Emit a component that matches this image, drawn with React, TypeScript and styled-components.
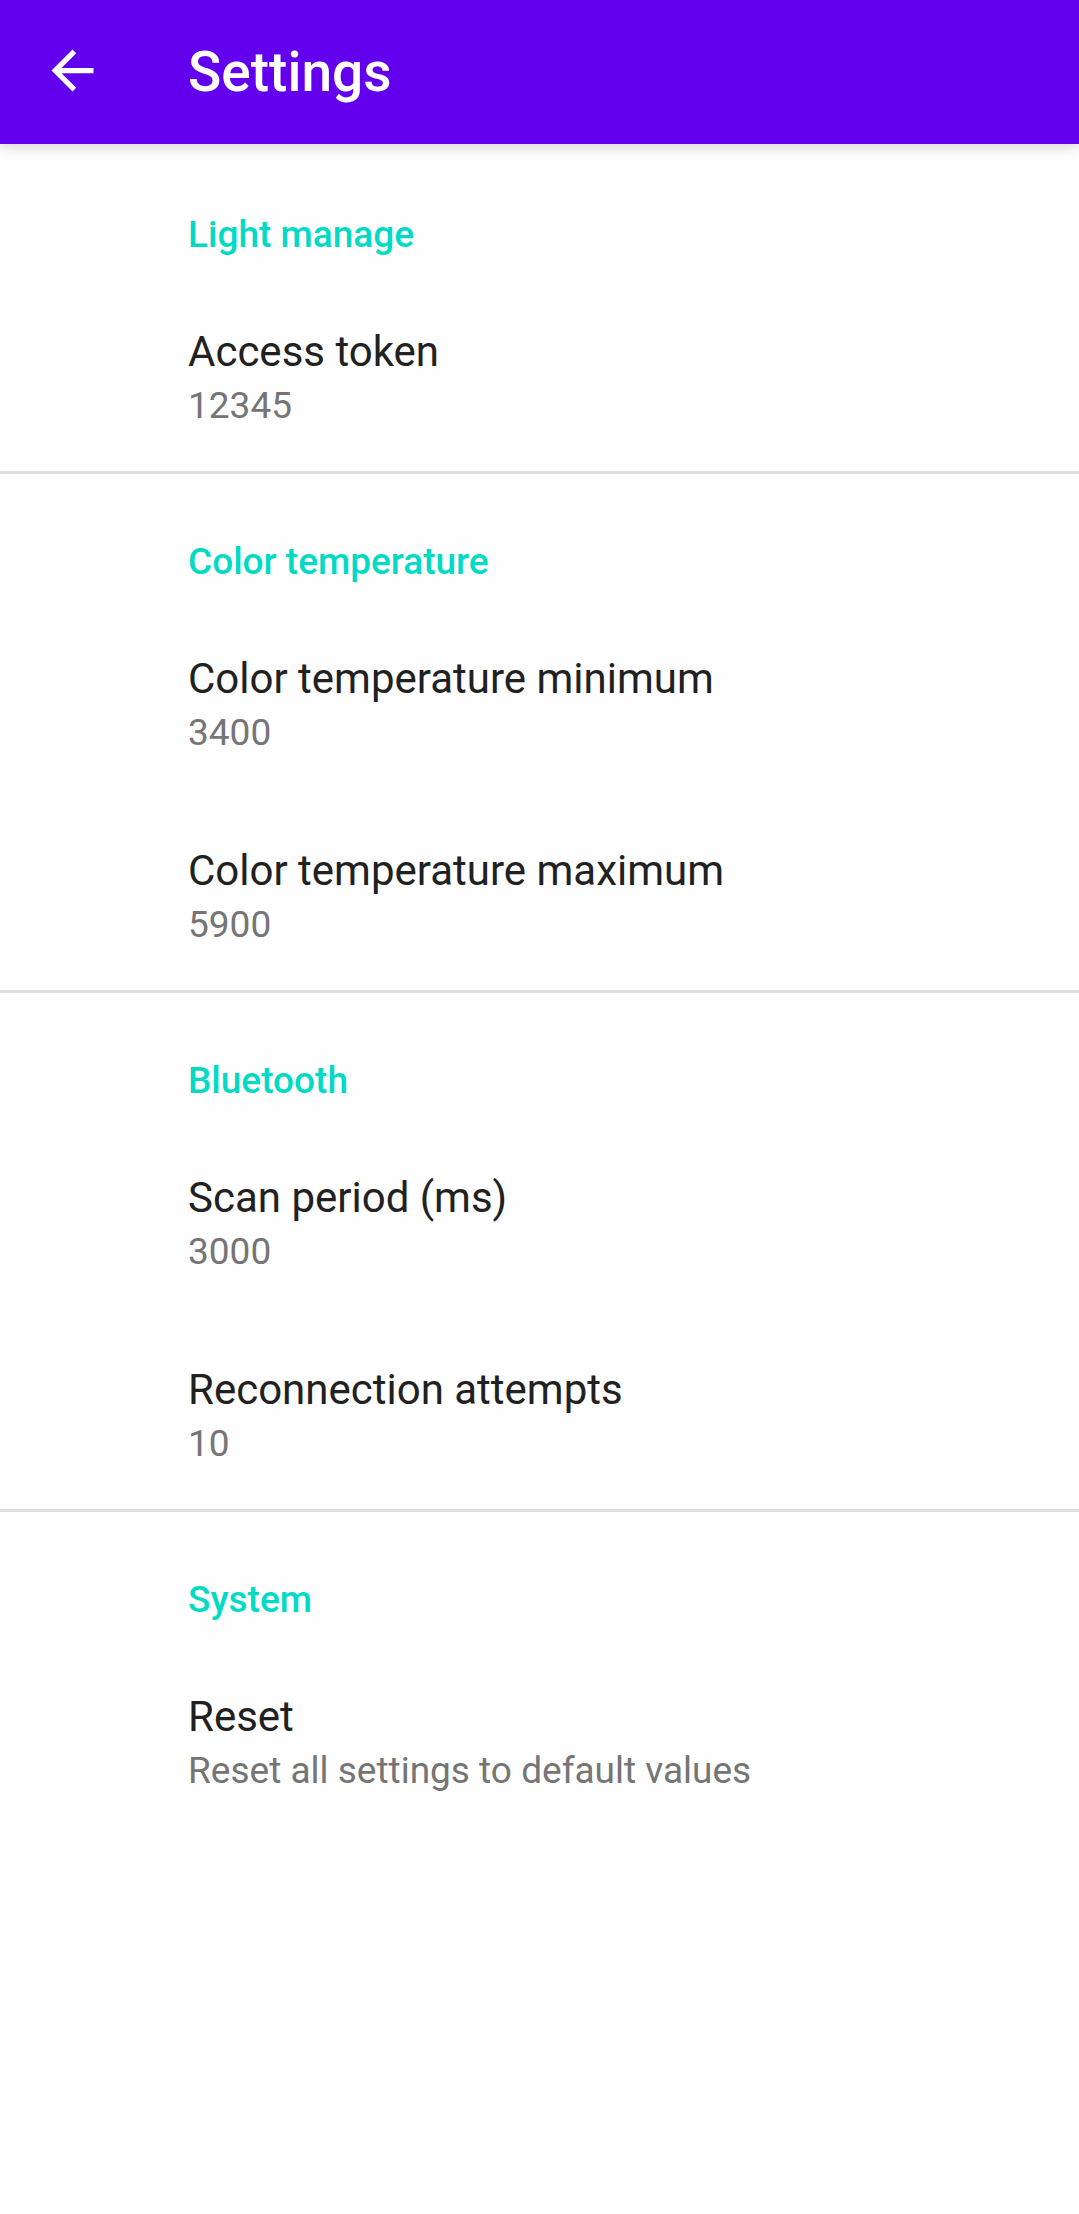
import React from "react";
import styled, { createGlobalStyle } from "styled-components";

const GlobalStyle = createGlobalStyle`
  * { box-sizing: border-box; }
  body { margin: 0; background: #fefefe; font-family: Roboto, "Noto Sans", sans-serif; }
`;

const AppBar = styled.header`
  display: flex;
  align-items: flex-start;
  height: 144px;
  background: #6200ee;
  color: #fff;
  box-shadow: 0 2px 14px rgba(0, 0, 0, 0.19);
`;

const BackButton = styled.button`
  display: flex;
  align-items: center;
  justify-content: center;
  width: 145px;
  height: 141px;
  padding: 0;
  border: 0;
  background: none;
  color: inherit;
  cursor: pointer;
`;

const Title = styled.h1`
  margin: 0;
  padding: 40px 48px 40px 43px;
  font-size: 55px;
  line-height: 64px;
  font-weight: 500;
`;

const Section = styled.section`
  border-top: 3px solid #dfdfdf;
  &:first-child { border-color: transparent; }
`;

const SectionTitle = styled.h2`
  margin: 0;
  padding: 66px 48px 22px 188px;
  color: #03dac5;
  font-size: 37px;
  line-height: 44px;
  font-weight: 500;
`;

const Preference = styled.button`
  display: flex;
  flex-direction: column;
  width: 100%;
  padding: 45px 48px 39px 188px;
  border: 0;
  background: none;
  font-family: inherit;
  text-align: left;
  cursor: pointer;
`;

const Label = styled.span`
  color: #212121;
  font-size: 42px;
  line-height: 56px;
`;

const Summary = styled.span`
  color: #757575;
  font-size: 37px;
  line-height: 52px;
`;

const groups = [
  { title: "Light manage", items: [{ label: "Access token", summary: "12345" }] },
  {
    title: "Color temperature",
    items: [
      { label: "Color temperature minimum", summary: "3400" },
      { label: "Color temperature maximum", summary: "5900" },
    ],
  },
  {
    title: "Bluetooth",
    items: [
      { label: "Scan period (ms)", summary: "3000" },
      { label: "Reconnection attempts", summary: "10" },
    ],
  },
  { title: "System", items: [{ label: "Reset", summary: "Reset all settings to default values" }] },
];

export default function App() {
  return (
    <>
      <GlobalStyle />
      <AppBar>
        <BackButton aria-label="Navigate up">
          <svg width="63" height="63" viewBox="0 0 24 24" fill="currentColor" aria-hidden="true">
            <path d="M20 11H7.83l5.59-5.59L12 4l-8 8 8 8 1.41-1.41L7.83 13H20v-2z" />
          </svg>
        </BackButton>
        <Title>Settings</Title>
      </AppBar>
      <main>
        {groups.map((group) => (
          <Section key={group.title}>
            <SectionTitle>{group.title}</SectionTitle>
            {group.items.map((item) => (
              <Preference key={item.label}>
                <Label>{item.label}</Label>
                <Summary>{item.summary}</Summary>
              </Preference>
            ))}
          </Section>
        ))}
      </main>
    </>
  );
}
